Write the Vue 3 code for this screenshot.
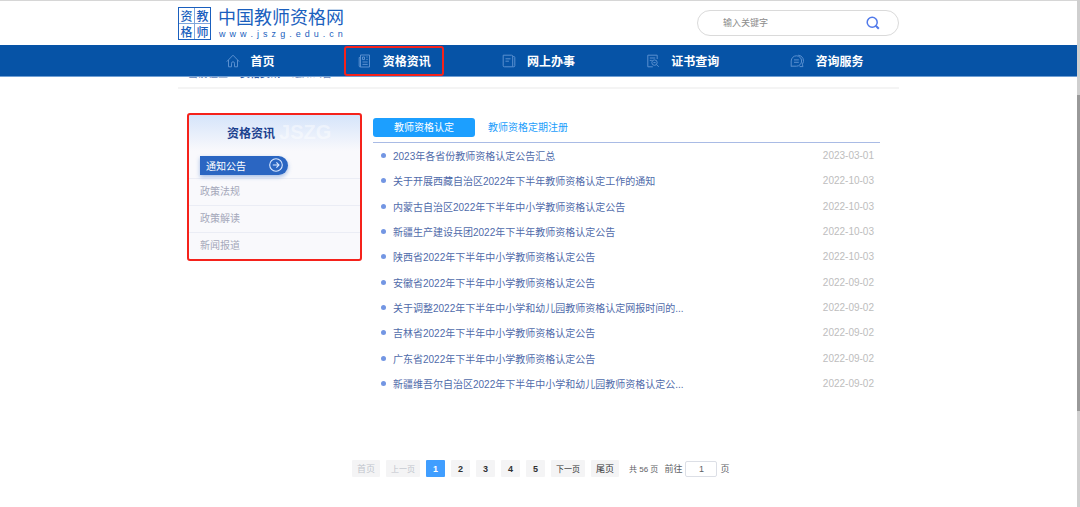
<script setup>
import { ref } from 'vue'

const seal = ['资', '教', '格', '师']
const domain = 'www.jszg.edu.cn'.split('')
const navItems = [
  { icon: 'home', label: '首页' },
  { icon: 'news', label: '资格资讯', marked: true },
  { icon: 'book', label: '网上办事' },
  { icon: 'cert', label: '证书查询' },
  { icon: 'chat', label: '咨询服务' },
]
const sideItems = ['政策法规', '政策解读', '新闻报道']
const notices = [
  { title: '2023年各省份教师资格认定公告汇总', date: '2023-03-01' },
  { title: '关于开展西藏自治区2022年下半年教师资格认定工作的通知', date: '2022-10-03' },
  { title: '内蒙古自治区2022年下半年中小学教师资格认定公告', date: '2022-10-03' },
  { title: '新疆生产建设兵团2022年下半年教师资格认定公告', date: '2022-10-03' },
  { title: '陕西省2022年下半年中小学教师资格认定公告', date: '2022-10-03' },
  { title: '安徽省2022年下半年中小学教师资格认定公告', date: '2022-09-02' },
  { title: '关于调整2022年下半年中小学和幼儿园教师资格认定网报时间的...', date: '2022-09-02' },
  { title: '吉林省2022年下半年中小学教师资格认定公告', date: '2022-09-02' },
  { title: '广东省2022年下半年中小学教师资格认定公告', date: '2022-09-02' },
  { title: '新疆维吾尔自治区2022年下半年中小学和幼儿园教师资格认定公...', date: '2022-09-02' },
]
const keyword = ref('')
const page = ref(1)
const jump = ref('1')
</script>

<template>
  <div class="page">
    <header class="header wrap">
      <a class="logo" href="#">
        <span class="seal"><span v-for="c in seal" :key="c">{{ c }}</span></span>
        <span class="brand">
          <span class="brand-name">中国教师资格网</span>
          <span class="brand-url"><span v-for="(c, i) in domain" :key="i">{{ c }}</span></span>
        </span>
      </a>
      <form class="search" @submit.prevent>
        <input v-model="keyword" type="text" placeholder="输入关键字" aria-label="输入关键字" />
        <button type="submit" aria-label="搜索">
          <svg width="14" height="14" viewBox="0 0 14 14" fill="none" stroke="#5079ea" stroke-width="1.5">
            <circle cx="6.2" cy="6.2" r="5" />
            <path d="M9.8 9.8 12.8 12.8" stroke-width="2" />
          </svg>
        </button>
      </form>
    </header>

    <nav class="nav">
      <div class="wrap nav-row">
        <a v-for="n in navItems" :key="n.label" href="#" class="nav-item" :class="{ marked: n.marked }">
          <svg v-if="n.icon === 'home'" class="nav-icon" viewBox="0 0 14 14">
            <path d="M.8 7.6 7 1.2l6.2 6.4M2.5 6v6.8h3V9.2q0-1.4 1.5-1.4t1.5 1.4v3.6h3V6" />
          </svg>
          <svg v-else-if="n.icon === 'news'" class="nav-icon" viewBox="0 0 14 14">
            <path d="M2.5 1h9v12h-9zM2.5 3.5H1.2V12q0 1 1.3 1M4.5 3h2v2.6h-2zM8.3 3h1.4M8.3 5.4h1.4M4.5 8h5.2M4.5 10.4h5.2" />
          </svg>
          <svg v-else-if="n.icon === 'book'" class="nav-icon" viewBox="0 0 14 14">
            <path d="M1.2 1.2h8.5q1 0 1 1v10.6H2.2q-1 0-1-1zM10.7 2.5h1.1q1 0 1 1v8.3q0 1-1 1h-1.1M3.5 4.8h5M3.5 7.2h3.4" />
          </svg>
          <svg v-else-if="n.icon === 'cert'" class="nav-icon" viewBox="0 0 14 14">
            <path d="M11.2 5V1.2H1.8v11.6h5M3.8 4h5.4M3.8 6.4h2" />
            <circle cx="8.5" cy="8.6" r="2.7" />
            <path d="m10.5 10.6 2.2 2.2M7.4 8.6h2.2" />
          </svg>
          <svg v-else class="nav-icon" viewBox="0 0 14 14">
            <path d="M1.2 12.6V7A5.2 5.2 0 1 1 6.4 12.2H1.2M4 5.9h4.8M4 8.3h4.8M8.2 1.2A5.6 5.6 0 0 1 12.4 10.2l.5 2.4H9.6" />
          </svg>
          <span>{{ n.label }}</span>
        </a>
      </div>
    </nav>

    <div class="wrap crumbs">
      <span>当前位置</span><b>资格资讯</b><span>通知公告</span>
    </div>

    <main class="wrap main">
      <aside class="side">
        <h2 class="side-title"><span>资格资讯</span><em>JSZG</em></h2>
        <div class="side-current">
          <a href="#" class="pill">
            <span>通知公告</span>
            <svg width="14" height="14" viewBox="0 0 14 14" fill="none" stroke="#dce9ff" stroke-width="1.1">
              <circle cx="7" cy="7" r="6.3" />
              <path d="M3.8 7h6M7.4 4.4 10 7 7.4 9.6" />
            </svg>
          </a>
        </div>
        <a v-for="s in sideItems" :key="s" href="#" class="side-item">{{ s }}</a>
      </aside>

      <section class="content">
        <div class="tabs">
          <button type="button" class="tab active">教师资格认定</button>
          <button type="button" class="tab">教师资格定期注册</button>
        </div>
        <ul class="list">
          <li v-for="n in notices" :key="n.title">
            <a href="#">{{ n.title }}</a>
            <time>{{ n.date }}</time>
          </li>
        </ul>
      </section>
    </main>

    <div class="wrap pager">
      <button type="button" class="word" disabled>首页</button>
      <button type="button" class="word small" disabled>上一页</button>
      <button v-for="p in 5" :key="p" type="button" class="num" :class="{ on: p === page }" @click="page = p">{{ p }}</button>
      <button type="button" class="word small">下一页</button>
      <button type="button" class="word">尾页</button>
      <span class="total">共 56 页</span>
      <label class="jump">前往<input v-model="jump" type="text" />页</label>
    </div>

    <div class="scrollbar"><div class="thumb"></div></div>
  </div>
</template>

<style>
body {
  margin: 0;
  background: #fff;
}
</style>

<style scoped>
.page {
  box-sizing: border-box;
  min-height: 100vh;
  padding-right: 3px;
  border-top: 1px solid #d6d6d6;
  font-family: "Liberation Sans", "Noto Sans CJK SC", sans-serif;
  font-size: 10px;
  color: #506baa;
}
a {
  color: inherit;
  text-decoration: none;
}
button,
input {
  font: inherit;
  border: 0;
  padding: 0;
  margin: 0;
  background: none;
}
.wrap {
  box-sizing: border-box;
  width: 100%;
  max-width: 721px;
  margin: 0 auto;
}
.header {
  display: flex;
  align-items: center;
  justify-content: space-between;
  height: 44px;
}
.logo {
  display: flex;
  align-items: center;
  gap: 7px;
  color: #1a5fbe;
}
.seal {
  display: grid;
  grid-template-columns: 15px 15px;
  gap: 1px;
  border: 1px solid #1a5fbe;
  background: linear-gradient(#7ea6dc, #7ea6dc) center / 1px 100% no-repeat,
    linear-gradient(#7ea6dc, #7ea6dc) center / 100% 1px no-repeat;
}
.seal span {
  font: 500 12px/15px "Noto Sans CJK SC", sans-serif;
  text-align: center;
}
.brand {
  display: flex;
  flex-direction: column;
}
.brand-name {
  font-size: 18px;
  line-height: 22px;
}
.brand-url {
  display: flex;
  justify-content: space-between;
  padding: 0 1px;
  font-size: 9px;
  line-height: 10px;
}
.search {
  display: flex;
  align-items: center;
  box-sizing: border-box;
  width: 202px;
  height: 26px;
  padding: 0 18px 0 25px;
  border: 1px solid #dadada;
  border-radius: 13px;
}
.search input {
  flex: 1;
  min-width: 0;
  font-size: 9px;
  color: #666;
  outline: 0;
}
.search input::placeholder {
  color: #8c8c8c;
}
.search button {
  display: flex;
}
.nav {
  position: relative;
  z-index: 1;
  background: #0653a6;
  border-bottom: 1px solid #6f9fd4;
}
.nav-row {
  display: flex;
}
.nav-item {
  position: relative;
  flex: 1;
  display: flex;
  align-items: center;
  justify-content: center;
  gap: 11px;
  height: 31px;
  font-size: 12px;
  font-weight: 700;
  color: #fff;
}
.nav-icon {
  width: 14px;
  height: 14px;
  fill: none;
  stroke: #5a90d0;
  stroke-width: 1;
}
.marked::after {
  content: "";
  position: absolute;
  inset: 1px 22px 0;
  border: 2px solid #f5221b;
  border-radius: 3px;
}
.crumbs {
  display: flex;
  gap: 12px;
  height: 22px;
  margin-top: -10px;
  padding-left: 10px;
  line-height: 14px;
  color: #5f7fb8;
  border-bottom: 2px solid #f4f4f4;
}
.crumbs b {
  color: #2f5ca8;
}
.main {
  display: flex;
  align-items: flex-start;
  gap: 11px;
  padding: 24px 19px 0 9px;
}
.side {
  box-sizing: border-box;
  width: 175px;
  border: 2px solid #f5221b;
  border-radius: 3px;
  background: linear-gradient(#d5e4fa, #f9f9fc 36px);
}
.side-title {
  display: flex;
  align-items: center;
  gap: 4px;
  height: 34px;
  margin: 0;
  padding: 0 0 3px 38px;
  font-size: 12px;
  color: #1c428f;
}
.side-title em {
  font-size: 20px;
  font-style: normal;
  color: #ffffff73;
}
.side-current {
  display: flex;
  align-items: center;
  height: 26px;
  padding-left: 11px;
}
.pill {
  display: flex;
  align-items: center;
  justify-content: space-between;
  box-sizing: border-box;
  width: 88px;
  height: 19px;
  padding: 0 5px 0 6px;
  border-radius: 0 10px 10px 0;
  background: #2b66c2;
  box-shadow: 0 2px 4px #2b66c266;
  color: #fff;
}
.side-item {
  display: block;
  padding-left: 11px;
  border-top: 1px solid #ebedf5;
  line-height: 26px;
  color: #a5a8ba;
}
.content {
  flex: 1;
  min-width: 0;
}
.tabs {
  display: flex;
  gap: 13px;
  padding: 5px 0;
  border-bottom: 1px solid #a9bbe5;
}
.tab {
  line-height: 19px;
  color: #1c9dfb;
}
.tab.active {
  width: 102px;
  border-radius: 3px;
  background: #1c9fff;
  color: #fff;
}
.list {
  display: grid;
  grid-auto-rows: 1fr;
  min-height: 253px;
  margin: 0;
  padding: 0;
  list-style: none;
}
.list li {
  display: flex;
  align-items: center;
  padding: 0 6px 0 8px;
}
.list li::before {
  content: "";
  width: 5px;
  height: 5px;
  margin-right: 7px;
  border-radius: 50%;
  background: #7396e3;
}
.list a {
  flex: 1;
}
.list time {
  color: #bdbdbd;
}
.pager {
  display: flex;
  align-items: center;
  gap: 6px;
  margin-top: 64px;
  padding-left: 174px;
  font-size: 9px;
  color: #606266;
}
.pager button {
  height: 17px;
  border-radius: 1px;
  background: #f4f4f5;
  color: #303133;
}
.pager .word {
  padding: 0 5px;
}
.pager .small {
  font-size: 8px;
}
.pager .num {
  width: 19px;
  font-weight: 700;
}
.pager button:disabled {
  color: #c0c4cc;
}
.pager .on {
  background: #409eff;
  color: #fff;
}
.total {
  margin-left: 4px;
  font-size: 8px;
}
.jump {
  display: flex;
  align-items: center;
  gap: 3px;
}
.jump input {
  box-sizing: border-box;
  width: 32px;
  height: 16px;
  border: 1px solid #dcdfe6;
  border-radius: 2px;
  text-align: center;
  color: #606266;
}
.scrollbar {
  position: fixed;
  inset: 0 0 0 auto;
  display: grid;
  grid-template-rows: 95fr 316fr 96fr;
  width: 3px;
  background: #cfcfcf;
}
.thumb {
  grid-row: 2;
  background: #999;
}
</style>
